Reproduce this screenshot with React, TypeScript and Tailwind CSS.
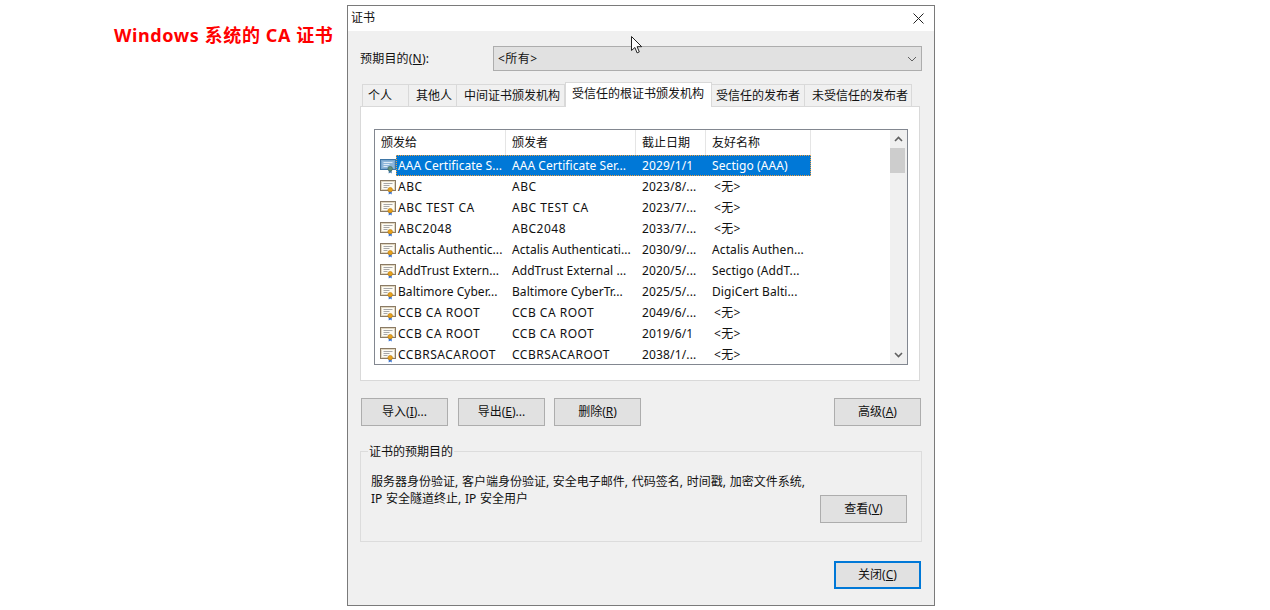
import { ReactNode } from "react";

const rows = [
  ["AAA Certificate S...", "AAA Certificate Ser...", "2029/1/1", "Sectigo (AAA)"],
  ["ABC", "ABC", "2023/8/...", "<无>"],
  ["ABC TEST CA", "ABC TEST CA", "2023/7/...", "<无>"],
  ["ABC2048", "ABC2048", "2033/7/...", "<无>"],
  ["Actalis Authentic...", "Actalis Authenticati...", "2030/9/...", "Actalis Authen..."],
  ["AddTrust Extern...", "AddTrust External ...", "2020/5/...", "Sectigo (AddT..."],
  ["Baltimore Cyber...", "Baltimore CyberTr...", "2025/5/...", "DigiCert Balti..."],
  ["CCB CA ROOT", "CCB CA ROOT", "2049/6/...", "<无>"],
  ["CCB CA ROOT", "CCB CA ROOT", "2019/6/1", "<无>"],
  ["CCBRSACAROOT", "CCBRSACAROOT", "2038/1/...", "<无>"],
];

const tabs = [
  { label: "个人", cls: "w-[47px] pl-[5px]" },
  { label: "其他人", cls: "w-[48px] pl-[7px]" },
  { label: "中间证书颁发机构", cls: "w-[108px] pl-[7px]" },
  { label: "受信任的根证书颁发机构", cls: "w-[147px] pl-[6px]", active: true },
  { label: "受信任的发布者", cls: "w-[93px] pl-[4px]" },
  { label: "未受信任的发布者", cls: "w-[107px] pl-[7px]" },
];

function CertIcon({ selected }: { selected?: boolean }) {
  return (
    <svg width="16" height="17" viewBox="0 0 16 17" className="shrink-0">
      <rect x="0.5" y="2.5" width="15" height="10" fill={selected ? "#8db6da" : "#fdfbf4"} stroke={selected ? "#3f76a6" : "#8a7a64"} />
      <rect x="1.5" y="3.5" width="13" height="8" fill="none" stroke={selected ? "#7aa8cf" : "#e0d6c0"} />
      <path d="M3.5 5.5h9M3.5 7.5h6M3.5 9.5h4" stroke={selected ? "#dcebf7" : "#a8a8a8"} strokeWidth="1" />
      <path d="M8.7 13v3.6l1.5-1 1.5 1V13" fill={selected ? "#3f76a6" : "#2f6fd6"} />
      <circle cx="10.2" cy="11.7" r="2.3" fill={selected ? "#5f8f7a" : "#e8a21c"} stroke={selected ? "#3f6a58" : "#b97a10"} strokeWidth="0.6" />
    </svg>
  );
}

function Btn({ children, focus, className = "" }: { children: ReactNode; focus?: boolean; className?: string }) {
  return (
    <div
      className={`flex h-[28px] w-[87px] items-center justify-center bg-[#e1e1e1] text-[12px] ${
        focus ? "border-2 border-[#0078d7]" : "border border-[#adadad]"
      } ${className}`}
    >
      {children}
    </div>
  );
}

export default function App() {
  return (
    <div
      className="relative flex h-[610px] w-[1270px] items-start overflow-hidden bg-white text-[#111111]"
      style={{ fontFamily: '"Noto Sans", "Noto Sans CJK SC", sans-serif' }}
    >
      <div className="mt-[22px] ml-[114px] w-[233px] text-[18px] leading-[26px] font-bold tracking-[0.6px] whitespace-pre text-[#ff0000]">
        Windows 系统的 CA 证书
      </div>

      <div className="mt-[5px] flex h-[601px] w-[588px] flex-col border border-[#7a7a7a] bg-[#f0f0f0] text-[12px]">
        <div className="flex h-[25px] items-center justify-between bg-white pr-[10px] pb-[1px] pl-[3px]">
          <span>证书</span>
          <svg width="11" height="11" viewBox="0 0 11 11">
            <path d="M0.5 0.5l10 10M10.5 0.5l-10 10" stroke="#222" strokeWidth="1" fill="none" />
          </svg>
        </div>

        <div className="flex flex-col pt-[15px] pr-[12px] pl-[12px]">
          <div className="flex h-[25px] items-center">
            <span className="w-[133px] tracking-[0.2px]">
              预期目的(<u>N</u>):
            </span>
            <div className="flex h-[25px] w-[429px] items-center justify-between border border-[#adadad] bg-[#e1e1e1] pr-[3px] pl-[4px]">
              <span className="tracking-[0.5px]">&lt;所有&gt;</span>
              <svg width="10" height="6" viewBox="0 0 10 6" className="mr-[1px]">
                <path d="M1 1l4 4 4-4" stroke="#606060" fill="none" />
              </svg>
            </div>
          </div>

          <div className="mt-[11px] flex h-[24px] items-end pl-[2px]">
            {tabs.map((t) =>
              t.active ? (
                <div
                  key={t.label}
                  className={`relative z-10 -mb-px flex h-[25px] items-center border border-b-0 border-[#d9d9d9] bg-white pb-[2px] ${t.cls}`}
                >
                  {t.label}
                </div>
              ) : (
                <div
                  key={t.label}
                  className={`flex h-[22px] items-center border-t border-r border-[#d9d9d9] bg-[#f0f0f0] first:border-l ${t.cls}`}
                >
                  {t.label}
                </div>
              ),
            )}
          </div>

          <div className="h-[275px] w-[560px] border border-[#d9d9d9] bg-white pt-[22px] pl-[13px]">
            <div className="flex h-[236px] w-[534px] overflow-hidden border border-[#828790]">
              <div className="w-[515px]">
                <div className="flex h-[25px]">
                  <div className="flex w-[131px] items-center border-r border-[#e5e5e5] pl-[6px]">颁发给</div>
                  <div className="flex w-[130px] items-center border-r border-[#e5e5e5] pl-[6px]">颁发者</div>
                  <div className="flex w-[70px] items-center border-r border-[#e5e5e5] pl-[6px]">截止日期</div>
                  <div className="flex w-[105px] items-center border-r border-[#e5e5e5] pl-[6px]">友好名称</div>
                </div>
                {rows.map((r, i) => {
                  const sel = i === 0;
                  // all-caps names render wider in the original font
                  const caps = r[0] === r[0].toUpperCase();
                  return (
                    <div key={i} className={`flex h-[21px] items-center ${caps ? "tracking-[0.5px]" : "tracking-[0.05px]"}`}>
                      <div className="flex h-full w-[21px] shrink-0 items-center justify-end">
                        <CertIcon selected={sel} />
                      </div>
                      <div
                        className={`flex h-full w-[415px] items-center whitespace-pre ${
                          sel ? "bg-[#0078d7] text-white outline-1 -outline-offset-1 outline-[#f0a040] outline-dotted" : ""
                        }`}
                      >
                        <span className="w-[116px] pl-[2px]">{r[0]}</span>
                        <span className="w-[130px]">{r[1]}</span>
                        <span className="w-[70px] tracking-[0.15px]">{r[2]}</span>
                        <span className={r[3] === "<无>" ? "pl-[2px] tracking-[0.3px]" : "tracking-[0.1px]"}>{r[3]}</span>
                      </div>
                    </div>
                  );
                })}
              </div>
              <div className="flex w-[17px] flex-col bg-[#f0f0f0]">
                <div className="flex h-[18px] items-center justify-center">
                  <svg width="9" height="6" viewBox="0 0 9 6">
                    <path d="M1 5l3.5-3.5L8 5" stroke="#606060" strokeWidth="1.6" fill="none" />
                  </svg>
                </div>
                <div className="h-[25px] w-[15px] bg-[#cdcdcd]" />
                <div className="flex-1" />
                <div className="flex h-[18px] items-center justify-center">
                  <svg width="9" height="6" viewBox="0 0 9 6">
                    <path d="M1 1l3.5 3.5L8 1" stroke="#606060" strokeWidth="1.6" fill="none" />
                  </svg>
                </div>
              </div>
            </div>
          </div>

          <div className="mt-[17px] flex pl-[1px]">
            <Btn>
              导入(<u>I</u>)...
            </Btn>
            <Btn className="ml-[10px]">
              导出(<u>E</u>)...
            </Btn>
            <Btn className="ml-[9px]">
              删除(<u>R</u>)
            </Btn>
            <Btn className="ml-[193px]">
              高级(<u>A</u>)
            </Btn>
          </div>

          <div className="relative mt-[25px] flex h-[91px] w-[562px] items-end justify-between border border-[#dcdcdc] pr-[14px] pb-[18px] pl-[10px]">
            <span className="absolute top-[-9px] left-[7px] bg-[#f0f0f0] px-px">证书的预期目的</span>
            <div className="mb-[16px] leading-[17px] [word-spacing:0.6px]">
              <div>服务器身份验证, 客户端身份验证, 安全电子邮件, 代码签名, 时间戳, 加密文件系统,</div>
              <div>IP 安全隧道终止, IP 安全用户</div>
            </div>
            <Btn>
              查看(<u>V</u>)
            </Btn>
          </div>

          <div className="mt-[19px] flex justify-end pr-px">
            <Btn focus>
              关闭(<u>C</u>)
            </Btn>
          </div>
        </div>
      </div>

      <svg width="13" height="18" viewBox="0 0 13 18" className="absolute top-[36px] left-[631px]">
        <path d="M0.5 0.5v14l3.4-3 2.2 5.4 2.2-1-2.2-5.2h4.6z" fill="#fff" stroke="#222" strokeWidth="1" />
      </svg>
    </div>
  );
}
